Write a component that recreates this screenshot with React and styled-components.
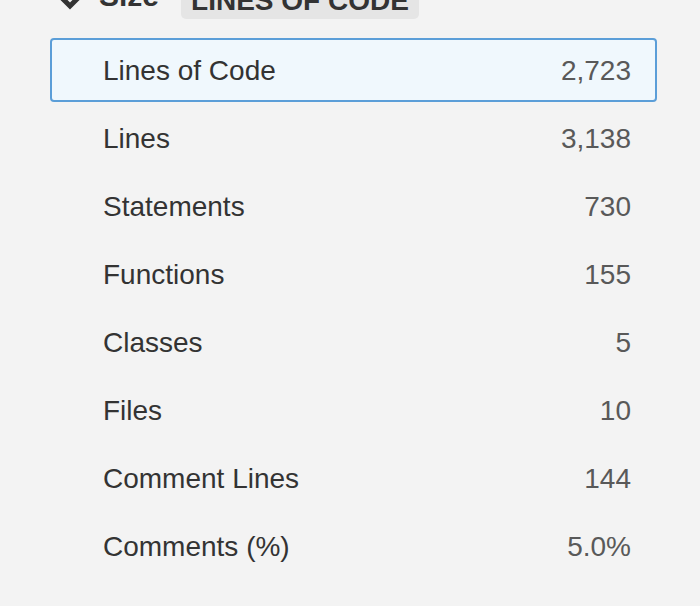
import React from "react";
import styled, { createGlobalStyle } from "styled-components";

const Global = createGlobalStyle`
  html, body { margin: 0; padding: 0; background: #f3f3f3; overflow: hidden; }
  body { font-family: "Liberation Sans", Arial, Helvetica, sans-serif; }
`;

const Page = styled.div`
  width: 700px;
  height: 606px;
  box-sizing: border-box;
  padding: 0 43px 0 50px;
  background: #f3f3f3;
  overflow: hidden;
`;

const Header = styled.div`
  display: flex;
  align-items: flex-end;
  height: 40px;
  margin-top: -21px;
  margin-bottom: 19px;
`;

const Caret = styled.svg`
  width: 24px;
  height: 24px;
  margin-left: 8px;
  margin-right: 17px;
  margin-bottom: 4px;
  flex: none;
`;

const Title = styled.span`
  font-size: 30px;
  font-weight: 700;
  color: #333;
  line-height: 30px;
  margin-bottom: 8px;
`;

const Badge = styled.span`
  margin-left: 22px;
  height: 40px;
  box-sizing: border-box;
  padding: 7px 10px 0;
  border-radius: 5px;
  background: #e5e5e5;
  color: #333;
  font-size: 28px;
  font-weight: 700;
  line-height: 30px;
  text-transform: uppercase;
  white-space: nowrap;
`;

const List = styled.div`
  display: flex;
  flex-direction: column;
  gap: 4px;
`;

const Row = styled.div`
  display: flex;
  align-items: center;
  justify-content: space-between;
  height: 64px;
  box-sizing: border-box;
  padding: 2px 24px 0 53px;
  border: 2px solid ${(p) => (p.$selected ? "#5b9ed8" : "transparent")};
  border-radius: 4px;
  background: ${(p) => (p.$selected ? "#f0f8fd" : "transparent")};
  font-size: 28px;
`;

const Label = styled.span`
  color: #333;
  margin-left: -2px;
`;

const Value = styled.span`
  color: #595959;
`;

const rows = [
  ["Lines of Code", "2,723"],
  ["Lines", "3,138"],
  ["Statements", "730"],
  ["Functions", "155"],
  ["Classes", "5"],
  ["Files", "10"],
  ["Comment Lines", "144"],
  ["Comments (%)", "5.0%"],
];

export default function App() {
  return (
    <Page>
      <Global />
      <Header>
        <Caret viewBox="0 0 24 24">
          <path d="M3 6 L12 15 L21 6" fill="none" stroke="#333" strokeWidth="5" strokeLinecap="butt" strokeLinejoin="miter" />
        </Caret>
        <Title>Size</Title>
        <Badge>Lines of Code</Badge>
      </Header>
      <List>
        {rows.map(([label, value], i) => (
          <Row key={label} $selected={i === 0}>
            <Label>{label}</Label>
            <Value>{value}</Value>
          </Row>
        ))}
      </List>
    </Page>
  );
}
